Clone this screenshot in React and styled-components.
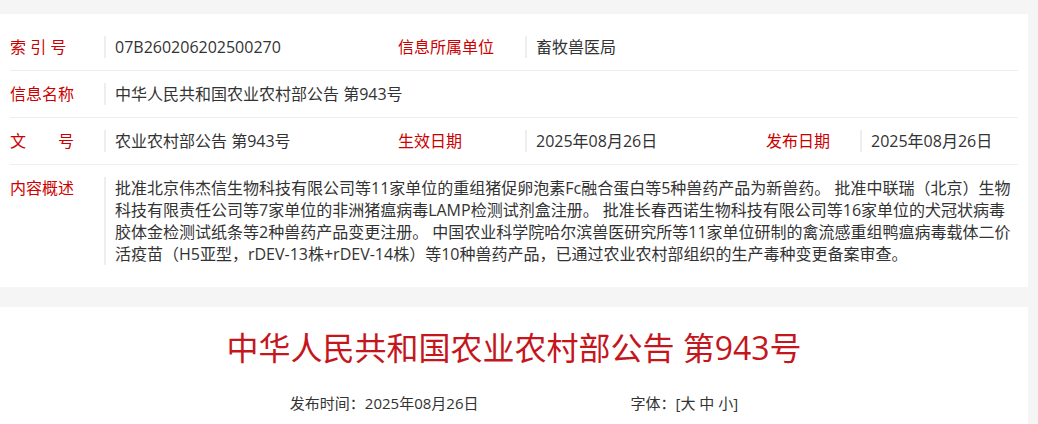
import React from 'react'
import styled, { createGlobalStyle } from 'styled-components'

const GlobalStyle = createGlobalStyle`
  html, body {
    margin: 0;
    padding: 0;
    background: #f5f5f5;
  }
  body {
    font-family: "Open Sans", "Noto Sans CJK SC", "Microsoft YaHei", sans-serif;
    color: #333;
  }
`

const meta = {
  index: '07B260206202500270',
  unit: '畜牧兽医局',
  name: '中华人民共和国农业农村部公告 第943号',
  docNo: '农业农村部公告 第943号',
  effective: '2025年08月26日',
  published: '2025年08月26日',
  summary:
    '批准北京伟杰信生物科技有限公司等11家单位的重组猪促卵泡素Fc融合蛋白等5种兽药产品为新兽药。 批准中联瑞（北京）生物科技有限责任公司等7家单位的非洲猪瘟病毒LAMP检测试剂盒注册。 批准长春西诺生物科技有限公司等16家单位的犬冠状病毒胶体金检测试纸条等2种兽药产品变更注册。 中国农业科学院哈尔滨兽医研究所等11家单位研制的禽流感重组鸭瘟病毒载体二价活疫苗（H5亚型，rDEV-13株+rDEV-14株）等10种兽药产品，已通过农业农村部组织的生产毒种变更备案审查。',
}

const App = () => {
  return (
    <Page>
      <GlobalStyle />
      <InfoPanel>
        <Row>
          <Label>索 引 号</Label>
          <Value>{meta.index}</Value>
          <Label>信息所属单位</Label>
          <Value $span={3}>{meta.unit}</Value>
        </Row>
        <Row>
          <Label>信息名称</Label>
          <Value $span={5}>{meta.name}</Value>
        </Row>
        <Row>
          <Label>文　　号</Label>
          <Value>{meta.docNo}</Value>
          <Label>生效日期</Label>
          <Value>{meta.effective}</Value>
          <Label>发布日期</Label>
          <Value>{meta.published}</Value>
        </Row>
        <Row $last>
          <Label>内容概述</Label>
          <Value $span={5}>{meta.summary}</Value>
        </Row>
      </InfoPanel>

      <ArticlePanel>
        <Title>{meta.name}</Title>
        <MetaLine>
          <span>发布时间：{meta.published}</span>
          <span>
            字体：[<SizeLink>大</SizeLink> <SizeLink>中</SizeLink> <SizeLink>小</SizeLink>]
          </span>
        </MetaLine>
      </ArticlePanel>
    </Page>
  )
}

const Page = styled.div`
  width: 1028px;
  padding-top: 14px;
`

const InfoPanel = styled.section`
  background: #fff;
  padding: 10px 10px 10px;
`

const Row = styled.div`
  display: grid;
  grid-template-columns: 94px 294px 127px 241px 94px 1fr;
  align-items: start;
  padding: 12px 0;
  border-bottom: ${(p) => (p.$last ? 'none' : '1px solid #eee')};
`

const Label = styled.div`
  font-size: 16px;
  line-height: 22px;
  color: #c00;
  white-space: nowrap;
`

const Value = styled.div`
  grid-column: span ${(p) => p.$span || 1};
  font-size: 16px;
  line-height: 22px;
  color: #333;
  border-left: 2px solid #eee;
  padding-left: 9px;
`

const ArticlePanel = styled.section`
  margin-top: 20px;
  background: #fff;
  padding: 17px 0 40px;
  text-align: center;
`

const Title = styled.h1`
  margin: 0;
  font-size: 32px;
  line-height: 48px;
  font-weight: normal;
  color: #c4161c;
`

const MetaLine = styled.div`
  margin-top: 20px;
  display: flex;
  justify-content: center;
  gap: 152px;
  font-size: 15px;
  line-height: 22px;
  color: #333;
`

const SizeLink = styled.a`
  color: #333;
  cursor: pointer;
`

export default App
